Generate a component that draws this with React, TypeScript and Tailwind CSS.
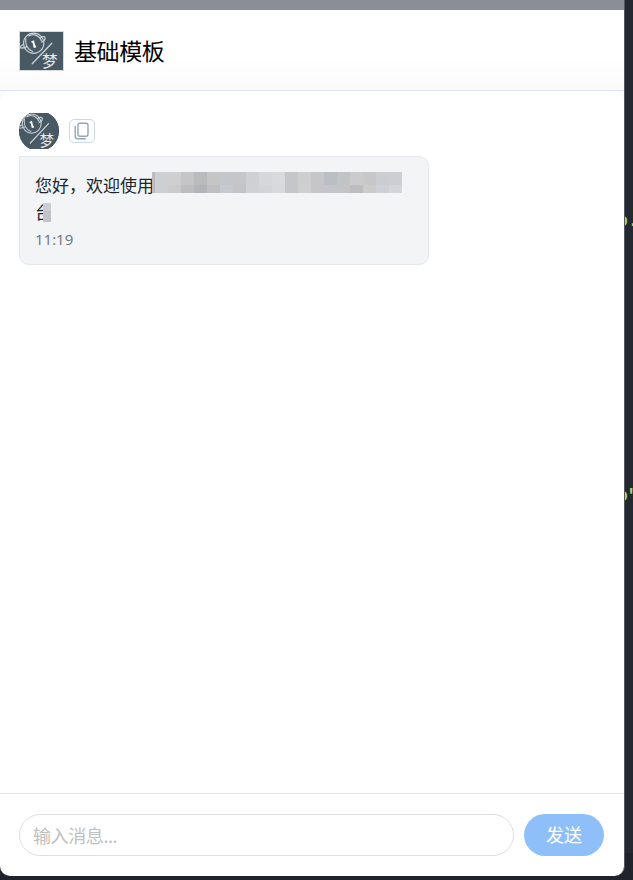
import React from 'react';

const topRow = ['#bbbcc0', '#cecfd3', '#cfcfd1', '#c5c5c7', '#babbbf', '#c5c5c5', '#c3c6cb', '#c5c6c9', '#cfd0d4', '#d6d7da', '#d9dadc', '#c5c6ca', '#cececf', '#c6c6c8', '#babfc5', '#c0c4c7', '#cbcbcd', '#c7c7c8', '#cccdd1', '#cbcfd4'];
const bottomRow = ['#bbbcc0', '#cecfd3', '#cbcbcd', '#bdbdbf', '#b3b4bb', '#bfbfc1', '#c6c9cf', '#c3c4c7', '#d0d1d5', '#d3d4d7', '#d8d9db', '#c5c6ca', '#cecfd0', '#c6c6c8', '#c4c5ca', '#c3c4c8', '#bdbdbf', '#cbcbca', '#cdd0d7', '#d4d5d9'];

function Mosaic() {
  return (
    <span className="absolute left-[132px] top-[15px] grid h-[21px] w-[250px] grid-cols-[3px_repeat(19,13px)] grid-rows-[13px_8px]">
      {topRow.concat(bottomRow).map((color, i) => (
        <span key={i} style={{ backgroundColor: color }} />
      ))}
    </span>
  );
}

function Emblem({ className }: { className: string }) {
  return (
    <svg viewBox="0 0 44 39" preserveAspectRatio="none" className={className} fill="none">
      <rect width="44" height="39" fill="#485963" />
      <g stroke="#c7d0d4" strokeWidth="1.2" strokeLinecap="round">
        <circle cx="14" cy="11.5" r="10.4" />
        <path d="M6 7c-1 6 2 11 7 13M9 4c5-3 11 0 13 5M3.5 13c-3 .5-3.5 2.5-2.5 3.5 2 0 4-.5 6-1.5M20.500 6.500c1.500-2 5-2.500 5.200-.5s-1.200 3.500-3.700 4.500" />
        <path d="M32.500 11.500 12.500 32.500" strokeWidth="1.4" />
      </g>
      <path d="M11.800 10.500l1.800-.8 1.200 5.500 1.700-.4" stroke="#fff" strokeWidth="1.9" />
      <text x="22.500" y="35.500" fontSize="16" fill="#e5eaed" fontFamily="'Noto Sans CJK SC', sans-serif">梦</text>
    </svg>
  );
}

export default function App() {
  return (
    <div className="relative h-[880px] w-[633px] overflow-hidden bg-[#20232b] font-['Noto_Sans_CJK_SC',sans-serif]">
      <div className="flex h-[876px] w-[625px] flex-col overflow-hidden rounded-b-[10px] border-r border-[#55585d] bg-white">
        <div className="h-[10px] shrink-0 bg-[#888f97]" />
        <header className="flex h-[81px] shrink-0 items-center gap-[10px] border-b border-[#dce2ee] bg-linear-to-b from-white from-60% to-[#fafafb] pt-px pl-[19px]">
          <div className="h-10 w-[45px] border border-[#d5d9dc]">
            <Emblem className="block h-full w-full" />
          </div>
          <h1 className="-mt-px text-[23px] leading-8 font-normal tracking-[-0.4px] text-black">基础模板</h1>
        </header>
        <div className="flex-1 bg-[#fafafb]">
          <main className="h-full rounded-t-[12px] bg-white pt-[22px] pl-[19px]">
            <div className="flex items-center gap-[10px]">
              <div className="flex h-9 w-10 items-center overflow-hidden">
                <div className="flex h-10 w-10 shrink-0 items-center overflow-hidden rounded-full bg-[#485963]">
                  <Emblem className="block h-9 w-10" />
                </div>
              </div>
              <button className="flex h-6 w-[26px] items-center justify-center rounded-[5px] border border-[#cbd8e5]">
                <svg width="16" height="18" viewBox="0 0 16 18" fill="none" stroke="#94a3b8" strokeWidth="1.4">
                  <rect x="4" y="1.2" width="10" height="13" rx="2" />
                  <path d="M1.2 4.2v10a2.6 2.6 0 0 0 2.6 2.6h7.500" strokeLinecap="round" />
                </svg>
              </button>
            </div>
            <div className="relative mt-[7px] h-[109px] w-[410px] rounded-[10px] rounded-tl-none border border-[#e5e7eb] bg-[#f3f4f6] pt-[14px] pl-[15px]">
              <p className="h-[54px] text-[17px] leading-[27px] text-[#20242b]">
                您好，欢迎使用
                <br />台
              </p>
              <time className="block pt-px font-['Open_Sans'] text-[15px] leading-[27px] text-[#6b7280]">11:19</time>
              <Mosaic />
              <span className="absolute top-[46px] left-[23px] flex h-[19px] w-2 flex-col">
                <span className="h-2 bg-[#cdcdd1]" />
                <span className="flex-1 bg-[#c1c3ca]" />
              </span>
            </div>
          </main>
        </div>
        <footer className="flex h-[83px] shrink-0 gap-[10px] border-t border-[#e5e7eb] pt-5 pl-[19px]">
          <input
            placeholder="输入消息..."
            className="h-[42px] w-[495px] rounded-full border border-[#dfdfe3] bg-white px-[13px] text-[18px] tracking-[-0.4px] outline-none placeholder:text-[#c0c0c0]"
          />
          <button className="h-[42px] w-20 rounded-full bg-[#8fbff9] pb-px text-[18px] font-normal text-white">发送</button>
        </footer>
      </div>
      <div className="absolute top-0 left-[625px] h-[853px] w-2 overflow-hidden bg-[#232831] font-['Liberation_Mono'] text-[18px] leading-[22px] text-[#a5d478]">
        <span className="absolute top-[210px] left-[-8px] font-bold">o.</span>
        <span className="absolute top-[485px] left-[-8px] font-bold">o"</span>
      </div>
    </div>
  );
}
